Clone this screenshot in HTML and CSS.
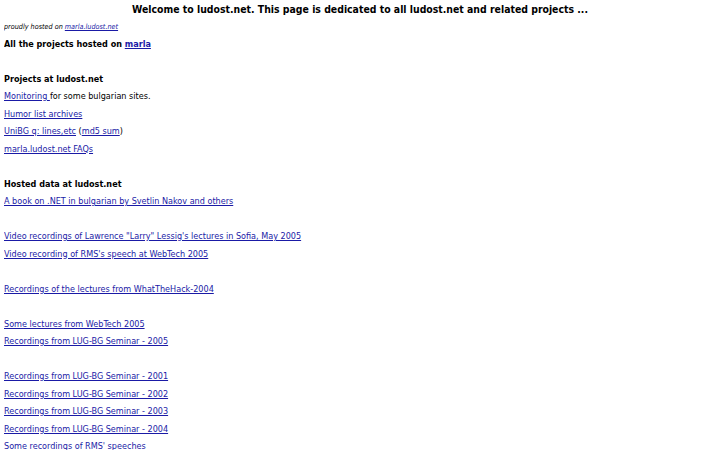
FILE: index.html
```html
<!DOCTYPE html>
<html lang="en">
  <head>
    <meta charset="UTF-8" />
    <title>ludost.net</title>
    <link rel="stylesheet" href="styles.css">
  </head>
  <body>
    <h1 class="title">Welcome to ludost.net. This page is dedicated to all ludost.net and related projects ...</h1>
    <p class="hosted">proudly hosted on <a href="#">marla.ludost.net</a></p>
    <h2 class="section">All the projects hosted on <a href="#">marla</a></h2>
    <div class="blank"></div>

    <h2 class="section">Projects at ludost.net</h2>
    <p><a href="#">Monitoring </a>for some bulgarian sites.</p>
    <p><a href="#">Humor list archives</a></p>
    <p><a href="#">UniBG q: lines,etc</a> (<a href="#">md5 sum</a>)</p>
    <p><a href="#">marla.ludost.net FAQs</a></p>
    <div class="blank"></div>

    <h2 class="section">Hosted data at ludost.net</h2>
    <p><a href="#">A book on .NET in bulgarian by Svetlin Nakov and others</a></p>
    <div class="blank"></div>
    <p><a href="#">Video recordings of Lawrence "Larry" Lessig's lectures in Sofia, May 2005</a></p>
    <p><a href="#">Video recording of RMS's speech at WebTech 2005</a></p>
    <div class="blank"></div>
    <p><a href="#">Recordings of the lectures from WhatTheHack-2004</a></p>
    <div class="blank"></div>
    <p><a href="#">Some lectures from WebTech 2005</a></p>
    <p><a href="#">Recordings from LUG-BG Seminar - 2005</a></p>
    <div class="blank"></div>
    <p><a href="#">Recordings from LUG-BG Seminar - 2001</a></p>
    <p><a href="#">Recordings from LUG-BG Seminar - 2002</a></p>
    <p><a href="#">Recordings from LUG-BG Seminar - 2003</a></p>
    <p><a href="#">Recordings from LUG-BG Seminar - 2004</a></p>
    <p><a href="#">Some recordings of RMS' speeches</a></p>
  </body>
</html>
```

FILE: styles.css
```css
body {
  margin: 0 4px;
  padding-top: 0.5px;
  font-family: "DejaVu Sans Condensed", "DejaVu Sans", sans-serif;
  font-size: 9px;
  color: #000;
  background: #fff;
}
a {
  color: #1a1aa6;
}
h1, h2, p {
  margin: 0;
  line-height: 17.5px;
}
.title {
  text-align: center;
  font-size: 10.4px;
}
.hosted {
  font-style: italic;
  font-size: 7.2px;
}
.section {
  font-size: 9px;
}
.blank {
  height: 17.5px;
}
```
